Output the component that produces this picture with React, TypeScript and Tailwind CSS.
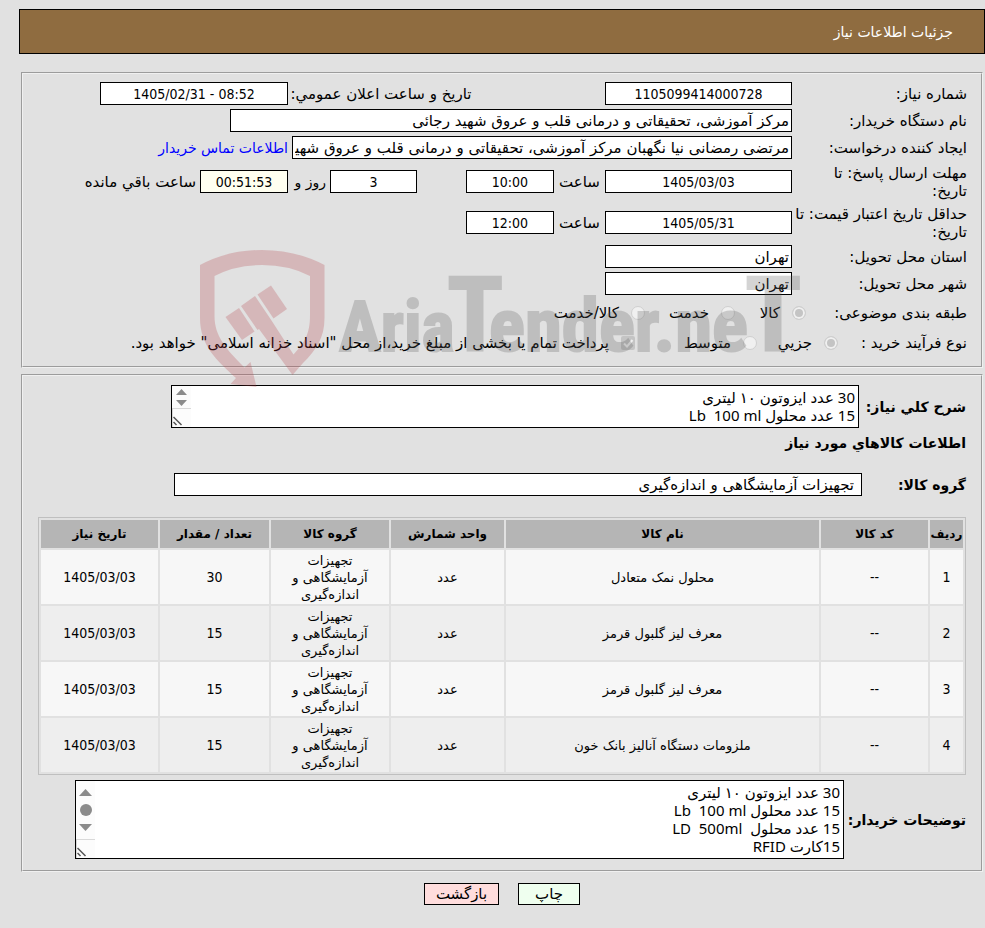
import React from "react";

const items = [
  { id: 1, code: "--", name: "محلول نمک متعادل", unit: "عدد", group: "تجهیزات آزمایشگاهی و اندازه‌گیری", count: 30, date: "1405/03/03" },
  { id: 2, code: "--", name: "معرف لیز گلبول قرمز", unit: "عدد", group: "تجهیزات آزمایشگاهی و اندازه‌گیری", count: 15, date: "1405/03/03" },
  { id: 3, code: "--", name: "معرف لیز گلبول قرمز", unit: "عدد", group: "تجهیزات آزمایشگاهی و اندازه‌گیری", count: 15, date: "1405/03/03" },
  { id: 4, code: "--", name: "ملزومات دستگاه آنالیز بانک خون", unit: "عدد", group: "تجهیزات آزمایشگاهی و اندازه‌گیری", count: 15, date: "1405/03/03" },
];

const columns = [
  { title: "ردیف", width: "w-[33px]" },
  { title: "کد کالا", width: "w-[107px]" },
  { title: "نام کالا", width: "" },
  { title: "واحد شمارش", width: "w-[113px]" },
  { title: "گروه کالا", width: "w-[118px]" },
  { title: "تعداد / مقدار", width: "w-[109px]" },
  { title: "تاریخ نیاز", width: "w-[117px]" },
];

const description = "30 عدد ایزوتون ۱۰ لیتری\n15 عدد محلول Lb  100 ml";
const notes =
  "30 عدد ایزوتون ۱۰ لیتری\n15 عدد محلول Lb  100 ml\n15 عدد محلول  LD  500ml\n15کارت RFID";

const narrow = "font-['DejaVu_Sans_Condensed','DejaVu_Sans',sans-serif] text-[14px]";
const box = "h-[23px] border border-black px-0.5 min-w-0";
const numberBox = `${box} ${narrow} text-center`;
const textArea =
  "block w-full resize-none overflow-hidden border border-black bg-white px-[3px] pt-[2px] font-['Noto_Sans','DejaVu_Sans',sans-serif]";
const panel = "border-2 border-[#f0f0f0] [border-style:groove]";
const radio =
  "appearance-none size-[14px] shrink-0 rounded-full border border-[#cfcfcf] bg-[#f0f0f0] checked:bg-[#c4c4c4] checked:shadow-[inset_0_0_0_2px_#f0f0f0]";

function Label({ id, children }: { id: string; children: React.ReactNode }) {
  return (
    <label htmlFor={id} className="w-[175px] shrink-0 leading-[18px]">
      {children}
    </label>
  );
}

function ScrollBar({ thumb }: { thumb?: boolean }) {
  const arrow = thumb ? "h-[7px] w-[13px]" : "h-[6px] w-[11px]";
  return (
    <div className="absolute inset-y-px left-px flex w-[19px] flex-col bg-[#fcfcfc]">
      <div className={thumb ? "flex grow flex-col items-center justify-evenly" : "flex grow flex-col items-center justify-around"}>
        <svg className={arrow} viewBox="0 0 13 7" fill="#8b8b8b">
          <path d="M6.500 0 13 7H0z" />
        </svg>
        {thumb && <span className="size-3 rounded-full bg-[#8b8b8b]"></span>}
        <svg className={arrow} viewBox="0 0 13 7" fill="#8b8b8b">
          <path d="M0 0h13L6.500 7z" />
        </svg>
      </div>
      <div className="flex h-[19px] items-end border-t border-l border-[#d9d9d9]">
        <svg width="18" height="11" viewBox="0 0 18 11" fill="none" stroke="#555" strokeWidth="1.500">
          <path d="M.5 1l8 8M.5 6l3 3" />
        </svg>
      </div>
    </div>
  );
}

function Watermark() {
  return (
    <svg
      className="pointer-events-none absolute top-[172px] left-[175px] z-10"
      width="610"
      height="145"
      viewBox="198 246 610 145"
      aria-hidden="true"
      direction="ltr"
    >
      <g fill="#b53d45" opacity="0.250">
        <path d="M200 265Q228 250 262 250Q296 250 324.500 265V318C324.500 338 316 350 303 363L292.500 375L259 329L257.500 330L241 306L255 296L271.500 320.500L293.500 354.500C305 342 310 334 310 315V276Q289 265 262 265Q235 265 214.500 276V316C214.500 336 226 349 244.500 367.500L250.500 362L256.500 387L230.500 384L236 378C216 360 200 345 200 318Z" />
        <path d="M225.500 317 239 308 254.500 331.500 242 340z" />
        <path d="M257.500 294.500 271 285.500 287 309 273.500 318.500z" />
      </g>
      <text
        y="351"
        fill="#595959"
        stroke="#595959"
        strokeWidth="2"
        opacity="0.250"
        className="font-['Liberation_Sans_Narrow','Roboto_Condensed','DejaVu_Sans_Condensed',sans-serif] text-[76px] font-bold"
      >
        <tspan x="339" className="text-[70px]">Aria</tspan>
        <tspan x="447" className="text-[104px]">T</tspan>
        <tspan x="489" className="text-[75px]">ender.ne</tspan>
        <tspan x="745" className="text-[104px]">T</tspan>
      </text>
    </svg>
  );
}

export default function App() {
  return (
    <div
      dir="rtl"
      className="min-h-screen bg-[#e1e1e1] pt-[9px] pb-6 font-['DejaVu_Sans',sans-serif] text-[15px] leading-[18px] text-black"
    >
      <header className="ml-[19px] flex h-[45px] items-center border border-black bg-[#8f6c40] pr-[31px] text-[14px] text-white">
        <h1>جزئیات اطلاعات نیاز</h1>
      </header>

      <main className="mt-[18px] mr-[2px] ml-[21px]">
        <section className={`relative pt-2 pr-[14px] pb-2 ${panel}`}>
          <div className="flex flex-col gap-1">
            <div className="flex items-center">
              <Label id="number">شماره نیاز:</Label>
              <input id="number" readOnly value="1105099414000728" className={`${numberBox} w-[187px] bg-white`} />
              <label htmlFor="announce" className="w-[317px] pr-[131px] text-center whitespace-nowrap">
                تاريخ و ساعت اعلان عمومي:
              </label>
              <input id="announce" dir="ltr" readOnly value="1405/02/31 - 08:52" className={`${numberBox} w-[188px] bg-white`} />
            </div>
            <div className="flex items-center">
              <Label id="buyer">نام دستگاه خریدار:</Label>
              <input id="buyer" readOnly value="مرکز آموزشی، تحقیقاتی و درمانی قلب و عروق شهید رجائی" className={`${box} w-[562px] bg-white`} />
            </div>
            <div className="flex items-center">
              <Label id="creator">ایجاد کننده درخواست:</Label>
              <input
                id="creator"
                readOnly
                value="مرتضی رمضانی نیا نگهبان مرکز آموزشی، تحقیقاتی و درمانی قلب و عروق شهید رجائی"
                className={`${box} w-[500px] bg-white`}
              />
              <a href="#contact" className="pr-1 text-[14px] whitespace-nowrap text-[#0000ff]">
                اطلاعات تماس خریدار
              </a>
            </div>
            <div className="flex h-[37px] items-center">
              <Label id="deadline">
                مهلت ارسال پاسخ: تا
                <br />
                تاریخ:
              </Label>
              <input id="deadline" readOnly value="1405/03/03" className={`${numberBox} w-[187px] bg-white`} />
              <label htmlFor="deadline-time" className="w-[51px] text-center">ساعت</label>
              <input id="deadline-time" readOnly value="10:00" className={`${numberBox} w-[88px] bg-white`} />
              <input id="days" readOnly value="3" className={`${numberBox} mr-[49px] w-[87px] bg-white`} />
              <label htmlFor="days" className="w-[42px] pr-1 text-[14px]">روز و</label>
              <input id="remaining" readOnly value="00:51:53" className={`${numberBox} w-[88px] bg-[#fffff0]`} />
              <label htmlFor="remaining" className="pr-1 whitespace-nowrap">ساعت باقي مانده</label>
            </div>
            <div className="flex h-[37px] items-center">
              <Label id="validity">
                حداقل تاریخ اعتبار قیمت: تا
                <br />
                تاریخ:
              </Label>
              <input id="validity" readOnly value="1405/05/31" className={`${numberBox} w-[187px] bg-white`} />
              <label htmlFor="validity-time" className="w-[51px] text-center">ساعت</label>
              <input id="validity-time" readOnly value="12:00" className={`${numberBox} w-[88px] bg-white`} />
            </div>
            <div className="flex items-center">
              <Label id="province">استان محل تحویل:</Label>
              <input id="province" readOnly value="تهران" className={`${box} w-[187px] bg-white`} />
            </div>
            <div className="flex items-center">
              <Label id="city">شهر محل تحویل:</Label>
              <input id="city" readOnly value="تهران" className={`${box} w-[187px] bg-white`} />
            </div>
          </div>

          <div className="mt-[3px] flex h-[30px] items-center" role="radiogroup" aria-label="طبقه بندی موضوعی">
            <span className="w-[161px]">طبقه بندی موضوعی:</span>
            <label className="flex w-[71px] items-center gap-3">
              <input type="radio" name="category" disabled defaultChecked className={radio} />
              کالا
            </label>
            <label className="flex w-[90px] items-center gap-3">
              <input type="radio" name="category" disabled className={radio} />
              خدمت
            </label>
            <label className="flex items-center gap-3">
              <input type="radio" name="category" disabled className={radio} />
              کالا/خدمت
            </label>
          </div>
          <div className="flex h-[30px] items-center whitespace-nowrap">
            <span className="w-[129px]">نوع فرآیند خرید :</span>
            <label className="flex w-[81px] items-center gap-3">
              <input type="radio" name="process" disabled defaultChecked className={radio} />
              جزيي
            </label>
            <label className="flex w-[122px] items-center gap-3">
              <input type="radio" name="process" disabled className={radio} />
              متوسط
            </label>
            <label className="flex items-center gap-3">
              <span className="relative flex">
                <input type="checkbox" disabled defaultChecked className="size-[14px] appearance-none rounded-xs bg-[#c4c4c4]" />
                <svg className="absolute inset-0" width="14" height="14" fill="none" stroke="#f0f0f0" strokeWidth="2">
                  <path d="M3 7.500 6 10.500 11.500 4" />
                </svg>
              </span>
              پرداخت تمام یا بخشی از مبلغ خرید،از محل "اسناد خزانه اسلامی" خواهد بود.
            </label>
          </div>
          <Watermark />
        </section>

        <section className={`mt-[6px] px-[15px] pt-[9px] pb-[11px] ${panel}`}>
          <div className="flex items-center">
            <label htmlFor="description" className="w-[107px] shrink-0 text-[14px] font-bold whitespace-nowrap">شرح کلي نیاز:</label>
            <div className="relative w-[688px] min-w-0">
              <textarea id="description" readOnly defaultValue={description} className={`${textArea} h-[43px]`} />
              <ScrollBar />
            </div>
          </div>
          <h2 className="mt-[6px] text-[14px] font-bold">اطلاعات کالاهاي مورد نیاز</h2>
          <div className="mt-[21px] flex items-center">
            <label htmlFor="group" className="w-[104px] shrink-0 text-[14px] font-bold">گروه کالا:</label>
            <input id="group" readOnly value="تجهیزات آزمایشگاهی و اندازه‌گیری" className="h-[23px] w-[688px] min-w-0 border border-black bg-white px-[7px]" />
          </div>

          <table className="mt-[21px] w-full table-fixed border-separate border-spacing-[2px] border border-[#bfbfbf] text-center text-[13px] leading-[17px]">
            <thead>
              <tr className="h-7 bg-[#b5b5b5] text-[12px]">
                {columns.map((column) => (
                  <th key={column.title} className={`${column.width} p-0 font-bold whitespace-nowrap`}>
                    {column.title}
                  </th>
                ))}
              </tr>
            </thead>
            <tbody>
              {items.map((item) => (
                <tr key={item.id} className="h-[54px] odd:bg-[#f7f7f7] even:bg-[#eeeeee]">
                  <td className={narrow}>{item.id}</td>
                  <td className={narrow}>{item.code}</td>
                  <td>{item.name}</td>
                  <td>{item.unit}</td>
                  <td className="px-3">{item.group}</td>
                  <td className={narrow}>{item.count}</td>
                  <td className={narrow}>{item.date}</td>
                </tr>
              ))}
            </tbody>
          </table>

          <div className="mt-[5px] flex items-center">
            <label htmlFor="notes" className="w-[122px] shrink-0 text-[14px] font-bold whitespace-nowrap">توضیحات خریدار:</label>
            <div className="relative w-[769px] min-w-0">
              <textarea id="notes" readOnly defaultValue={notes} className={`${textArea} h-[79px]`} />
              <ScrollBar thumb />
            </div>
          </div>
        </section>

        <div className="mt-[11px] flex justify-center gap-[19px]">
          <button type="button" className="h-[22px] w-[62px] border border-black bg-[#efffef]">
            چاپ
          </button>
          <button type="button" className="h-[22px] w-[75px] border border-black bg-[#ffdddd]">
            بازگشت
          </button>
        </div>
      </main>
    </div>
  );
}
